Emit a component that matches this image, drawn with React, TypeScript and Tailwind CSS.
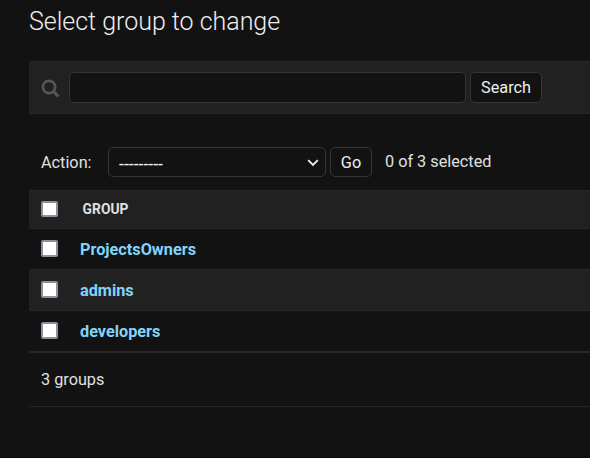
import React from "react";

const groups = ["ProjectsOwners", "admins", "developers"];

function Check({ label, className = "h-[17px]" }: { label: string; className?: string }) {
  return (
    <input
      type="checkbox"
      aria-label={label}
      className={`mb-px block w-[17px] shrink-0 appearance-none rounded-[2px] border-2 border-[#8f8f9d] bg-white ${className}`}
    />
  );
}

export default function App() {
  return (
    <div className="flex h-[458px] w-[590px] flex-col overflow-hidden border-b border-[#080808] bg-[#121212] pl-[29px] font-['Roboto',sans-serif] text-[16.25px] leading-5 text-[#e0e0e0]">
      <h1 className="mt-[7px] h-[30px] text-[25px] leading-[30px] font-light tracking-[-0.02px] text-[#eeeeee]">
        Select group to change
      </h1>

      <form className="mt-[24px] flex h-[53px] shrink-0 items-center border-y border-[#272727] bg-[#212121] pl-3">
        <svg viewBox="0 0 20 20" className="mt-0.5 size-5 shrink-0" fill="none" stroke="#555555">
          <circle cx="8" cy="8" r="6.2" strokeWidth="2.7" />
          <path d="M12.500 12.500 17.500 17.500" strokeWidth="3.100" />
        </svg>
        <input
          aria-label="Search groups"
          className="ml-2 h-[31px] w-[397px] rounded-[5px] border border-[#353535] bg-[#121212] px-2 outline-none"
        />
        <button
          type="button"
          className="ml-1 h-[31px] w-[72px] rounded-[5px] border border-[#353535] bg-[#121212] text-[#eeeeee]"
        >
          Search
        </button>
      </form>

      <div className="mt-[33px] flex h-[30px] shrink-0 items-center pl-3">
        <span className="w-[67px] pt-0.5">Action:</span>
        <div className="flex h-[30px] w-[218px] items-center justify-between rounded-[5px] border border-[#353535] pt-0.5 pr-[6px] pl-[10px] text-[#eeeeee]">
          <span className="pt-px text-[17.5px] tracking-[0.05px]">---------</span>
          <svg viewBox="0 0 12 8" className="h-2 w-3" fill="none" stroke="#eeeeee" strokeWidth="1.9">
            <path d="M1.2 1.2 6 6l4.800-4.800" />
          </svg>
        </div>
        <button
          type="button"
          className="ml-1 h-[30px] w-[42px] rounded-[5px] border border-[#353535] pt-0.5 text-[#eeeeee]"
        >
          Go
        </button>
        <span className="ml-[13px]">0 of 3 selected</span>
      </div>

      <div className="mt-[13px] flex h-[39px] shrink-0 items-center border-y border-[#272727] bg-[#212121] pl-3">
        <Check label="Select all groups" className="h-4" />
        <span className="ml-[24.5px] pb-0.5 text-[13.75px] font-bold tracking-[0.1px]">GROUP</span>
      </div>
      <div className="shrink-0">
        {groups.map((name) => (
          <div
            key={name}
            className="flex h-[41px] items-center border-b border-[#272727] pl-3 odd:bg-[#121212] even:bg-[#212121]"
          >
            <Check label={name} />
            <a href="#" className="ml-[22px] pt-0.5 font-bold text-[#81d4fa]">
              {name}
            </a>
          </div>
        ))}
      </div>
      <p className="flex h-[55px] shrink-0 items-center border-t border-b border-[#272727] pt-px pl-3">3 groups</p>
    </div>
  );
}
